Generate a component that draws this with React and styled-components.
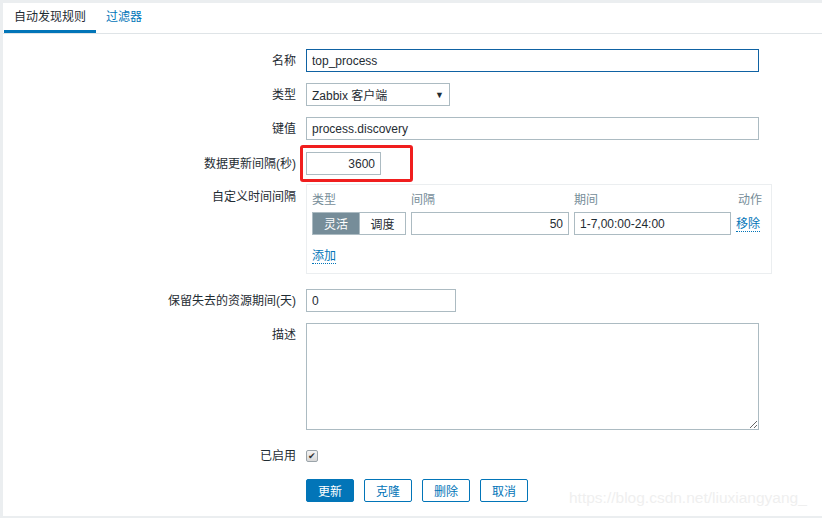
import React from "react";
import styled, { createGlobalStyle } from "styled-components";

const GlobalStyle = createGlobalStyle`
  html, body {
    margin: 0;
    padding: 0;
    background: #ebeef0;
  }
  body {
    font-family: "Liberation Sans", Arial, "Noto Sans CJK SC", sans-serif;
    font-size: 12px;
    color: #1f2c33;
  }
`;

const Page = styled.div`
  padding: 3px 0 0 3px;
  height: 513px;
`;

const Panel = styled.div`
  position: relative;
  background: #fff;
  height: 513px;
  overflow: hidden;
`;

const TabBar = styled.div`
  display: flex;
  height: 30px;
  padding-left: 1px;
  border-bottom: 1px solid #dfe4e7;
`;

const Tab = styled.div`
  padding: 0 10px;
  line-height: 28px;
  font-size: 12px;
  color: ${p => (p.active ? "#1f2c33" : "#0275b8")};
  border-bottom: 3px solid ${p => (p.active ? "#0275b8" : "transparent")};
  height: 27px;
`;

const Form = styled.div`
  padding-top: 15px;
`;

const Row = styled.div`
  display: grid;
  grid-template-columns: 293px 1fr;
  column-gap: 10px;
  margin-bottom: ${p => p.gap ?? 11}px;
`;

const Label = styled.div`
  text-align: right;
  line-height: 14px;
  padding-top: ${p => p.top ?? 5}px;
  white-space: nowrap;
`;

const Field = styled.div`
  display: flex;
  align-items: flex-start;
`;

const TextBox = styled.input`
  box-sizing: border-box;
  width: ${p => p.w}px;
  height: 23px;
  margin: 0;
  padding: 0 5px;
  border: 1px solid ${p => (p.focused ? "#0f62a3" : "#acbbc2")};
  border-radius: 0;
  background: #fff;
  font-family: inherit;
  font-size: 12px;
  color: #1f2c33;
  text-align: ${p => (p.right ? "right" : "left")};
  outline: none;
`;

const SelectBox = styled.div`
  box-sizing: border-box;
  width: 144px;
  height: 23px;
  display: flex;
  align-items: center;
  justify-content: space-between;
  padding: 0 5px;
  border: 1px solid #acbbc2;
  font-size: 12px;
`;

const Arrow = styled.span`
  font-size: 9px;
  color: #1f2c33;
`;

const Marked = styled.span`
  position: relative;
  display: inline-block;
`;

const RedMark = styled.span`
  position: absolute;
  left: -6px;
  top: -7px;
  width: 113px;
  height: 37px;
  box-sizing: border-box;
  border: 3px solid #f01e1e;
  border-radius: 3px;
  pointer-events: none;
`;

const IntervalBox = styled.div`
  box-sizing: border-box;
  width: 466px;
  height: 90px;
  border: 1px solid #ebeef0;
  padding: 8px 0 0 5px;
`;

const IntervalGrid = styled.div`
  display: grid;
  grid-template-columns: 94px 158px 157px auto;
  column-gap: 5px;
  row-gap: 5px;
  align-items: center;
`;

const HeadCell = styled.div`
  color: #768d99;
  line-height: 14px;
  text-align: ${p => (p.right ? "right" : "left")};
  padding-right: ${p => (p.right ? 9 : 0)}px;
`;

const Segmented = styled.div`
  display: flex;
  box-sizing: border-box;
  height: 23px;
  border: 1px solid #acbbc2;
`;

const Segment = styled.div`
  width: ${p => p.w}px;
  display: flex;
  align-items: center;
  justify-content: center;
  background: ${p => (p.active ? "#768d99" : "#fff")};
  color: ${p => (p.active ? "#fff" : "#1f2c33")};
  border-left: ${p => (p.active ? "none" : "1px solid #acbbc2")};
`;

const LinkText = styled.span`
  color: #0275b8;
  border-bottom: 1px dotted #0275b8;
  line-height: 14px;
  cursor: pointer;
`;

const AddLine = styled.div`
  margin-top: 14px;
`;

const TextArea = styled.textarea`
  box-sizing: border-box;
  width: 453px;
  height: 107px;
  margin: 0;
  border: 1px solid #acbbc2;
  border-radius: 0;
  font-family: inherit;
  font-size: 12px;
  resize: both;
  outline: none;
`;

const Check = styled.span`
  box-sizing: border-box;
  display: inline-flex;
  align-items: center;
  justify-content: center;
  width: 12px;
  height: 12px;
  margin-top: 8px;
  border: 1px solid #9aa4aa;
  border-radius: 2px;
  background: linear-gradient(#f4f4f4, #d8d8d8);
  color: #333;
  font-size: 9px;
  line-height: 1;
`;

const Buttons = styled.div`
  display: flex;
  gap: 10px;
`;

const Button = styled.button`
  box-sizing: border-box;
  width: 48px;
  height: 23px;
  padding: 0;
  border: 1px solid #0275b8;
  border-radius: 2px;
  background: ${p => (p.primary ? "#0275b8" : "#fff")};
  color: ${p => (p.primary ? "#fff" : "#0275b8")};
  font-family: inherit;
  font-size: 12px;
`;

const Watermark = styled.div`
  position: absolute;
  left: 566px;
  top: 486px;
  font-size: 15.5px;
  color: #efefef;
  white-space: nowrap;
`;

export default function App() {
  return (
    <Page>
      <GlobalStyle />
      <Panel>
        <TabBar>
          <Tab active>自动发现规则</Tab>
          <Tab>过滤器</Tab>
        </TabBar>
        <Form>
          <Row gap={11}>
            <Label>名称</Label>
            <Field>
              <TextBox w={453} focused defaultValue="top_process" readOnly />
            </Field>
          </Row>
          <Row gap={11}>
            <Label>类型</Label>
            <Field>
              <SelectBox>
                <span>Zabbix 客户端</span>
                <Arrow>▼</Arrow>
              </SelectBox>
            </Field>
          </Row>
          <Row gap={12}>
            <Label>键值</Label>
            <Field>
              <TextBox w={453} defaultValue="process.discovery" readOnly />
            </Field>
          </Row>
          <Row gap={9}>
            <Label>数据更新间隔(秒)</Label>
            <Field>
              <Marked>
                <TextBox w={75} right defaultValue="3600" readOnly />
                <RedMark />
              </Marked>
            </Field>
          </Row>
          <Row gap={15}>
            <Label top={6}>自定义时间间隔</Label>
            <Field>
              <IntervalBox>
                <IntervalGrid>
                  <HeadCell>类型</HeadCell>
                  <HeadCell>间隔</HeadCell>
                  <HeadCell>期间</HeadCell>
                  <HeadCell right>动作</HeadCell>
                  <Segmented>
                    <Segment w={47} active>灵活</Segment>
                    <Segment w={46}>调度</Segment>
                  </Segmented>
                  <TextBox w={158} right defaultValue="50" readOnly />
                  <TextBox w={157} defaultValue="1-7,00:00-24:00" readOnly />
                  <div>
                    <LinkText>移除</LinkText>
                  </div>
                </IntervalGrid>
                <AddLine>
                  <LinkText>添加</LinkText>
                </AddLine>
              </IntervalBox>
            </Field>
          </Row>
          <Row gap={11}>
            <Label>保留失去的资源期间(天)</Label>
            <Field>
              <TextBox w={150} defaultValue="0" readOnly />
            </Field>
          </Row>
          <Row gap={12}>
            <Label>描述</Label>
            <Field>
              <TextArea readOnly />
            </Field>
          </Row>
          <Row gap={16}>
            <Label top={7}>已启用</Label>
            <Field>
              <Check>✔</Check>
            </Field>
          </Row>
          <Row gap={0}>
            <div />
            <Buttons>
              <Button primary>更新</Button>
              <Button>克隆</Button>
              <Button>删除</Button>
              <Button>取消</Button>
            </Buttons>
          </Row>
        </Form>
        <Watermark>https://blog.csdn.net/liuxiangyang_</Watermark>
      </Panel>
    </Page>
  );
}
